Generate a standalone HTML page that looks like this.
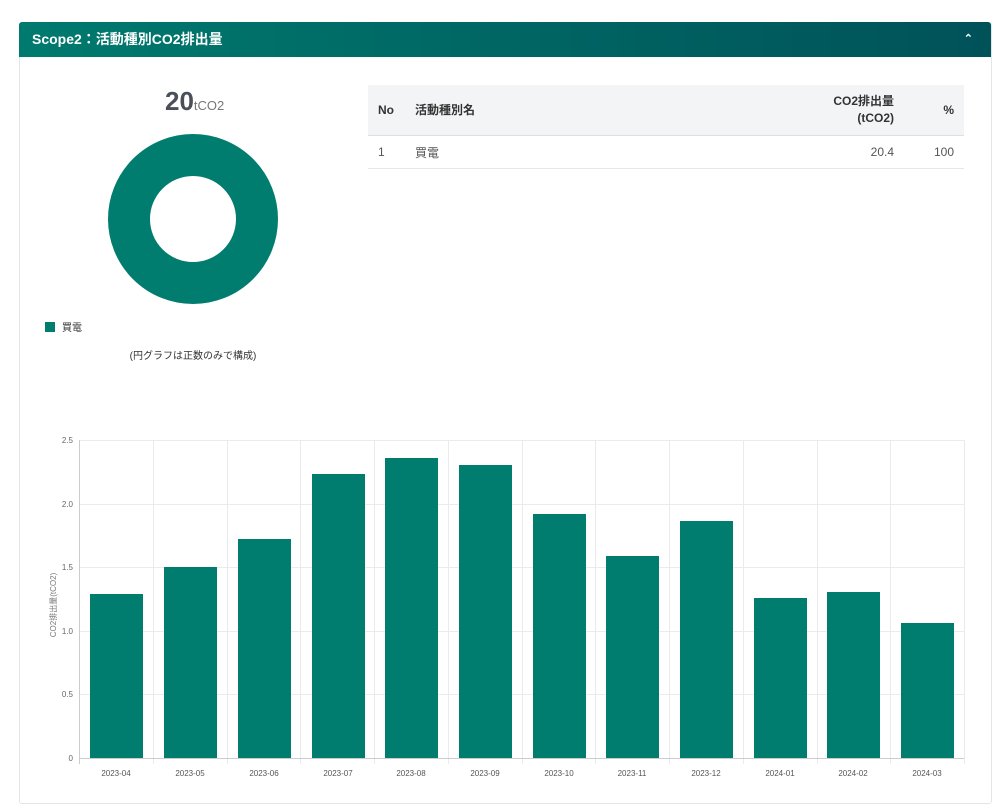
<!DOCTYPE html>
<html><head><meta charset="utf-8"><style>
body{margin:0;width:1000px;height:788px;background:#fff;font-family:"Liberation Sans","Noto Sans CJK JP",sans-serif;overflow:hidden;position:relative}
.card{position:absolute;left:19px;top:22px;width:971px;height:780px;border:1px solid #e3e6e8;border-radius:3px}
.hd{position:absolute;left:19px;top:22px;width:972px;height:35px;background:linear-gradient(90deg,#007a6e,#005259);border-radius:3px 3px 0 0;color:#fff;font-weight:bold;font-size:14px;line-height:35px}
.hd span{position:absolute;left:13px}
.hd i{position:absolute;right:18px;top:0;font-style:normal;font-size:11px}
table{position:absolute;left:368px;top:85px;width:596px;border-collapse:collapse;font-size:12px;color:#333}
th{background:#f3f4f6;height:50px;text-align:left;font-weight:bold;border-bottom:1px solid #dcdfe3;padding:0 10px;line-height:17px}
td{height:32px;padding:0 10px;color:#555;border-bottom:1px solid #e5e7ea}
.r{text-align:right}
</style></head><body>
<div class="card"></div>
<div class="hd"><span>Scope2：活動種別CO2排出量</span><i>⌃</i></div>
<div style="position:absolute;left:165px;top:86px;color:#4a4f5a;font-size:26px;font-weight:bold">20<span style="font-size:13px;font-weight:normal;color:#777">tCO2</span></div>
<svg style="position:absolute;left:0;top:0" width="1000" height="788">
<circle cx="193" cy="219" r="64" fill="none" stroke="#007d6f" stroke-width="42"/>
<rect x="45" y="322" width="10" height="10" fill="#007d6f"/>
<text x="62" y="331" font-size="10" fill="#333" font-family="Liberation Sans,Noto Sans CJK JP,sans-serif">買電</text>
<text x="193" y="359" font-size="10" fill="#333" text-anchor="middle" font-family="Liberation Sans,Noto Sans CJK JP,sans-serif">(円グラフは正数のみで構成)</text>
<g stroke="#ebebeb" stroke-width="1">
<line x1="79" y1="440.5" x2="964" y2="440.5"/><line x1="79" y1="504.5" x2="964" y2="504.5"/><line x1="79" y1="567.5" x2="964" y2="567.5"/><line x1="79" y1="631.5" x2="964" y2="631.5"/><line x1="79" y1="694.5" x2="964" y2="694.5"/>
<line x1="153.5" y1="440" x2="153.5" y2="764"/><line x1="227.5" y1="440" x2="227.5" y2="764"/><line x1="300.5" y1="440" x2="300.5" y2="764"/><line x1="374.5" y1="440" x2="374.5" y2="764"/><line x1="448.5" y1="440" x2="448.5" y2="764"/><line x1="522.5" y1="440" x2="522.5" y2="764"/><line x1="595.5" y1="440" x2="595.5" y2="764"/><line x1="669.5" y1="440" x2="669.5" y2="764"/><line x1="743.5" y1="440" x2="743.5" y2="764"/><line x1="817.5" y1="440" x2="817.5" y2="764"/><line x1="890.5" y1="440" x2="890.5" y2="764"/><line x1="964.5" y1="440" x2="964.5" y2="764"/>
</g>
<line x1="79.5" y1="440" x2="79.5" y2="764" stroke="#ccc"/>
<line x1="79" y1="758.5" x2="964" y2="758.5" stroke="#ccc"/>
<g fill="#007d6f">
<rect x="90" y="594" width="53" height="164"/>
<rect x="164" y="567" width="53" height="191"/>
<rect x="238" y="539" width="53" height="219"/>
<rect x="312" y="474" width="53" height="284"/>
<rect x="385" y="458" width="53" height="300"/>
<rect x="459" y="465" width="53" height="293"/>
<rect x="533" y="514" width="53" height="244"/>
<rect x="606" y="556" width="53" height="202"/>
<rect x="680" y="521" width="53" height="237"/>
<rect x="754" y="598" width="53" height="160"/>
<rect x="827" y="592" width="53" height="166"/>
<rect x="901" y="623" width="53" height="135"/>
</g>
<g font-size="8" fill="#666" text-anchor="end" font-family="Liberation Sans,sans-serif">
<text x="73" y="443">2.5</text><text x="73" y="507">2.0</text><text x="73" y="570">1.5</text><text x="73" y="634">1.0</text><text x="73" y="697">0.5</text><text x="73" y="761">0</text>
</g>
<g font-size="8" fill="#555" text-anchor="middle" font-family="Liberation Sans,sans-serif">
<text x="116" y="776">2023-04</text><text x="190" y="776">2023-05</text><text x="264" y="776">2023-06</text><text x="338" y="776">2023-07</text><text x="411" y="776">2023-08</text><text x="485" y="776">2023-09</text><text x="559" y="776">2023-10</text><text x="632" y="776">2023-11</text><text x="706" y="776">2023-12</text><text x="780" y="776">2024-01</text><text x="853" y="776">2024-02</text><text x="927" y="776">2024-03</text>
</g>
<text transform="translate(56,605) rotate(-90)" font-size="8" fill="#777" text-anchor="middle" font-family="Liberation Sans,Noto Sans CJK JP,sans-serif">CO2排出量(tCO2)</text>
</svg>
<table>
<tr><th style="width:17px">No</th><th>活動種別名</th><th class="r" style="width:110px">CO2排出量<br>(tCO2)</th><th class="r" style="width:40px">%</th></tr>
<tr><td>1</td><td>買電</td><td class="r">20.4</td><td class="r">100</td></tr>
</table>
</body></html>
